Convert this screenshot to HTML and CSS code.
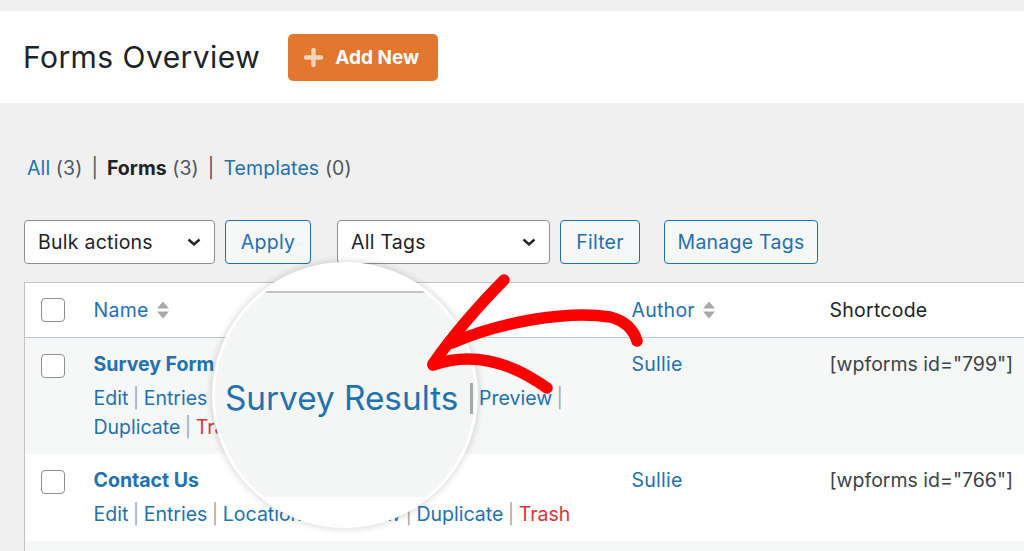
FILE: index.html
```html
<!DOCTYPE html>
<html lang="en">
<head>
  <meta charset="UTF-8"/>
  <meta name="viewport" content="width=device-width,initial-scale=1"/>
  <title>Forms Overview</title>
  <link rel="stylesheet" href="styles.css">
</head>
<body>
<div class="page">

  <!-- Title bar -->
  <header class="page-head">
    <h1>Forms Overview</h1>
    <a class="add-new" href="#">
      <svg width="19" height="19" viewBox="0 0 19 19"><path d="M9.5 2v15M2 9.5h15" stroke="#f8d4ba" stroke-width="4.4" stroke-linecap="round"/></svg>
      Add New
    </a>
  </header>

  <div class="wrap">
    <!-- Views -->
    <ul class="views">
      <li><a href="#">All</a> <span class="count">(3)</span><span class="sep">|</span></li>
      <li><b>Forms</b> <span class="count">(3)</span><span class="sep">|</span></li>
      <li><a href="#">Templates</a> <span class="count">(0)</span></li>
    </ul>

    <!-- Toolbar -->
    <div class="tablenav">
      <div class="select bulk">Bulk actions
        <svg width="16" height="10" viewBox="0 0 16 10"><path d="M2.5 2.5l5.5 5 5.5-5" fill="none" stroke="#1d2327" stroke-width="2.4"/></svg>
      </div>
      <button class="btn apply">Apply</button>
      <div class="select tags">All Tags
        <svg width="16" height="10" viewBox="0 0 16 10"><path d="M2.5 2.5l5.5 5 5.5-5" fill="none" stroke="#1d2327" stroke-width="2.4"/></svg>
      </div>
      <button class="btn filter">Filter</button>
      <button class="btn manage">Manage Tags</button>
    </div>

    <!-- Forms table -->
    <table class="forms">
      <colgroup>
        <col class="c-check"><col class="c-name"><col class="c-author"><col class="c-short">
      </colgroup>
      <thead>
        <tr>
          <th class="check"><span class="cb"></span></th>
          <th><a href="#" class="sortable">Name
            <svg width="14" height="20" viewBox="0 0 14 20"><path d="M7 1.5l6 7H1z M1 11.5h12l-6 7z" fill="#a7aaad"/></svg></a></th>
          <th><a href="#" class="sortable">Author
            <svg width="14" height="20" viewBox="0 0 14 20"><path d="M7 1.5l6 7H1z M1 11.5h12l-6 7z" fill="#a7aaad"/></svg></a></th>
          <th class="plain">Shortcode</th>
        </tr>
      </thead>
      <tbody>
        <tr class="alt">
          <td class="check"><span class="cb"></span></td>
          <td>
            <a href="#" class="title">Survey Form</a>
            <div class="row-actions">
              <div><span><a href="#">Edit</a> | </span><span><a href="#">Entries</a> | </span><span><a href="#">Locations</a> | </span><span><a href="#">Survey Results</a> | </span><span><a href="#">Preview</a> | </span></div>
              <div><span><a href="#">Duplicate</a> | </span><span><a href="#" class="trash">Trash</a></span></div>
            </div>
          </td>
          <td><a href="#">Sullie</a></td>
          <td class="code">[wpforms id="799"]</td>
        </tr>
        <tr>
          <td class="check"><span class="cb"></span></td>
          <td>
            <a href="#" class="title">Contact Us</a>
            <div class="row-actions">
              <span><a href="#">Edit</a> | </span><span><a href="#">Entries</a> | </span><span><a href="#">Locations</a> | </span><span><a href="#">Preview</a> | </span><span><a href="#">Duplicate</a> | </span><span><a href="#" class="trash">Trash</a></span>
            </div>
          </td>
          <td><a href="#">Sullie</a></td>
          <td class="code">[wpforms id="766"]</td>
        </tr>
        <tr class="alt">
          <td class="check"><span class="cb"></span></td>
          <td><a href="#" class="title">Newsletter Signup</a></td>
          <td><a href="#">Sullie</a></td>
          <td class="code">[wpforms id="741"]</td>
        </tr>
      </tbody>
    </table>
  </div>

  <!-- Magnifier over the row actions -->
  <div class="loupe">
    <div class="loupe-top"></div>
    <div class="loupe-line"></div>
    <div class="loupe-body"><a href="#">Survey Results</a><span class="bar"></span></div>
    <div class="loupe-bottom"></div>
  </div>

  <!-- Hand-drawn arrow -->
  <svg class="arrow" width="1024" height="551" viewBox="0 0 1024 551">
    <g fill="none" stroke="#fe0000" stroke-width="11.5" stroke-linecap="round" stroke-linejoin="round">
      <path d="M452 343C500 322 568 310 610 317C626 321 634 331 637 341"/>
      <path d="M504 280C482 302 452 336 433 364"/>
      <path d="M433 365C470 352 508 360 547 388"/>
    </g>
  </svg>
</div>
</body>
</html>
```

FILE: styles.css
```css
/* === Base === */
* { margin:0; padding:0; box-sizing:border-box; }
html, body { width:100%; height:100%; overflow:hidden; }
body {
  background:#f0f0f1;
  color:#3c434a;
  font-family: Inter, "Noto Sans", sans-serif;
  font-size:19.5px;
  letter-spacing:0.25px;
}
a { color:#2271b1; text-decoration:none; }

.page { position:relative; height:551px; padding-top:11px; overflow:hidden; }

/* === Title bar === */
.page-head {
  background:#fff;
  height:92px;
  display:flex;
  align-items:center;
  gap:28px;
  padding-left:23px;
}
.page-head h1 { font-size:30px; font-weight:400; color:#1d2327; letter-spacing:0.45px; }
.add-new {
  display:flex; align-items:center; gap:12px;
  width:150px; height:47px;
  padding-left:16px;
  background:#e27730; color:#fff;
  border-radius:5px;
  font-size:19px; font-weight:700; letter-spacing:0;
}

/* === Views + toolbar === */
.wrap { padding-left:24px; }
.views { display:flex; list-style:none; margin:51px 0 0 3px; line-height:29px; letter-spacing:0.1px; }
.views b { color:#1d2327; font-weight:700; letter-spacing:0; }
.views .count { color:#50575e; }
.views .sep { color:#50575e; margin:0 9px 0 9px; }

.tablenav { display:flex; align-items:center; margin-top:37px; height:44px; }
.select {
  display:flex; align-items:center; justify-content:space-between;
  height:44px; padding:0 12px 0 13px;
  background:#fff; color:#1d2327;
  border:1px solid #8c8f94; border-radius:4px;
}
.select.bulk { width:191px; }
.select.tags { width:213px; margin-left:26px; }
.btn {
  height:44px; padding:0;
  font:inherit; letter-spacing:inherit; color:#2271b1;
  background:#f6f7f7;
  border:1px solid #2271b1; border-radius:4px;
}
.btn.apply { width:86px; margin-left:10px; }
.btn.filter { width:80px; margin-left:10px; }
.btn.manage { width:154px; margin-left:24px; }

/* === Table === */
.forms {
  margin-top:18px;
  width:1060px;
  table-layout:fixed;
  border-collapse:collapse;
  background:#fff;
  border:1px solid #c3c4c7;
}
.c-check { width:59px; }
.c-name { width:538px; }
.c-author { width:198px; }
.c-short { width:265px; }
.forms th {
  height:55px; padding:0 10px;
  text-align:left; font-weight:400;
  border-bottom:1px solid #c3c4c7;
}
.forms th.plain { color:#1d2327; }
.sortable { display:inline-flex; align-items:center; gap:7px; }
.forms td { vertical-align:top; padding:12px 10px 12px; line-height:29px; }
.forms tr.alt td { background:#f6f7f7; }
.forms .check { padding-left:16px; }
.forms td.check { padding-top:16px; }
.cb {
  display:block; width:24px; height:24px;
  background:#fff; border:1px solid #8c8f94; border-radius:4px;
}
.title { font-weight:700; letter-spacing:0; }
.code { color:#3c434a; letter-spacing:0; }
.row-actions { margin-top:5px; color:#a7aaad; letter-spacing:0; word-spacing:-1px; }
.row-actions span { white-space:nowrap; }
.row-actions .trash { color:#d63638; }

/* === Magnifier === */
.loupe {
  position:absolute; left:212px; top:262px;
  width:266px; height:266px;
  display:flex; flex-direction:column;
  border:3px solid #fff; border-radius:50%;
  box-shadow:0 0 7px 1px rgba(0,0,0,.16);
  overflow:hidden;
  background:#f4f5f5;
}
.loupe-top { height:26px; background:#fff; flex:none; }
.loupe-line { height:2px; background:#c3c4c7; flex:none; }
.loupe-body { flex:1; display:flex; align-items:flex-start; padding:84px 0 0 10px; white-space:nowrap; }
.loupe-body a { font-size:33.3px; line-height:42px; letter-spacing:0; }
.loupe-body .bar { flex:none; width:3px; height:31px; margin:6px 0 0 12px; background:#a7aaad; }
.loupe-bottom { height:28px; background:#fff; flex:none; }

.arrow { position:absolute; left:0; top:0; pointer-events:none; }
```
